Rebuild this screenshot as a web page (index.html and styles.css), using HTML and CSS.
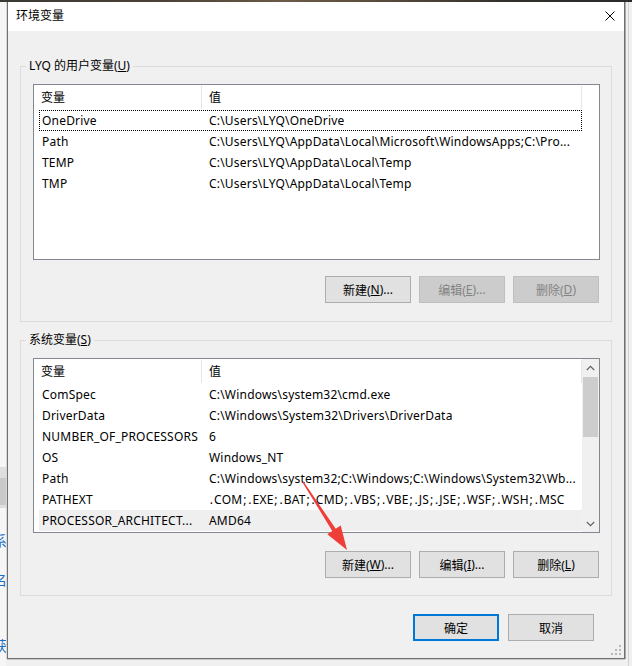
FILE: index.html
```html
<!DOCTYPE html>
<html lang="zh-CN">
<head>
<meta charset="utf-8">
<title>环境变量</title>
<link rel="stylesheet" href="styles.css">
</head>
<body>
<div class="desktop">
  <div class="wallpaper-strip"></div>
  <div class="back-window">
    <div class="back-band"></div>
    <span class="back-link first">系</span>
    <span class="back-link second">名</span>
    <span class="back-link third">获</span>
  </div>
  <div class="back-right"></div>

  <div class="dialog">
    <div class="titlebar">
      <span class="title">环境变量</span>
      <span class="close">
        <svg width="10" height="10" viewBox="0 0 10 10"><path d="M0.5 0.5 L9.5 9.5 M9.5 0.5 L0.5 9.5" stroke="#000" stroke-width="1" fill="none"/></svg>
      </span>
    </div>

    <div class="dialog-body">
      <fieldset class="group group-user">
        <legend>LYQ 的用户变量(<u>U</u>)</legend>
        <div class="group-inner">
          <div class="list list-user">
            <div class="list-main">
              <div class="list-head">
                <div class="hcol hname">变量</div>
                <div class="hcol hval">值</div>
              </div>
              <div class="row focused"><span class="c1">OneDrive</span><span class="c2">C:\Users\LYQ\OneDrive</span></div>
              <div class="row"><span class="c1">Path</span><span class="c2">C:\Users\LYQ\AppData\Local\Microsoft\WindowsApps;C:\Pro...</span></div>
              <div class="row"><span class="c1">TEMP</span><span class="c2">C:\Users\LYQ\AppData\Local\Temp</span></div>
              <div class="row"><span class="c1">TMP</span><span class="c2">C:\Users\LYQ\AppData\Local\Temp</span></div>
            </div>
          </div>
          <div class="btnrow">
            <button class="btn">新建(<u>N</u>)...</button>
            <button class="btn" disabled>编辑(<u>E</u>)...</button>
            <button class="btn" disabled>删除(<u>D</u>)</button>
          </div>
        </div>
      </fieldset>

      <fieldset class="group group-system">
        <legend>系统变量(<u>S</u>)</legend>
        <div class="group-inner">
          <div class="list list-system">
            <div class="list-main">
              <div class="list-head">
                <div class="hcol hname">变量</div>
                <div class="hcol hval">值</div>
              </div>
              <div class="row"><span class="c1">ComSpec</span><span class="c2">C:\Windows\system32\cmd.exe</span></div>
              <div class="row"><span class="c1">DriverData</span><span class="c2">C:\Windows\System32\Drivers\DriverData</span></div>
              <div class="row"><span class="c1">NUMBER_OF_PROCESSORS</span><span class="c2">6</span></div>
              <div class="row"><span class="c1">OS</span><span class="c2">Windows_NT</span></div>
              <div class="row"><span class="c1">Path</span><span class="c2">C:\Windows\system32;C:\Windows;C:\Windows\System32\Wb...</span></div>
              <div class="row"><span class="c1">PATHEXT</span><span class="c2"><span class="pu">.</span>COM<span class="pu">;</span><span class="pu">.</span>EXE<span class="pu">;</span><span class="pu">.</span>BAT<span class="pu">;</span><span class="pu">.</span>CMD<span class="pu">;</span><span class="pu">.</span>VBS<span class="pu">;</span><span class="pu">.</span>VBE<span class="pu">;</span><span class="pu">.</span>JS<span class="pu">;</span><span class="pu">.</span>JSE<span class="pu">;</span><span class="pu">.</span>WSF<span class="pu">;</span><span class="pu">.</span>WSH<span class="pu">;</span><span class="pu">.</span>MSC</span></div>
              <div class="row selected"><span class="c1">PROCESSOR_ARCHITECT...</span><span class="c2">AMD64</span></div>
            </div>
            <div class="scrollbar">
              <div class="sb-arrow">
                <svg width="9" height="6" viewBox="0 0 9 6"><path d="M0.8 5 L4.5 1.3 L8.2 5" stroke="#606060" stroke-width="1.1" fill="none"/></svg>
              </div>
              <div class="sb-track"><div class="sb-thumb"></div></div>
              <div class="sb-arrow">
                <svg width="9" height="6" viewBox="0 0 9 6"><path d="M0.8 1 L4.5 4.7 L8.2 1" stroke="#606060" stroke-width="1.1" fill="none"/></svg>
              </div>
            </div>
          </div>
          <div class="btnrow">
            <button class="btn">新建(<u>W</u>)...</button>
            <button class="btn">编辑(<u>I</u>)...</button>
            <button class="btn">删除(<u>L</u>)</button>
          </div>
        </div>
      </fieldset>

      <div class="actions">
        <button class="btn default">确定</button>
        <button class="btn">取消</button>
      </div>
    </div>

    <svg class="grip" width="11" height="11" viewBox="0 0 11 11">
      <rect x="8" y="0" width="2" height="2" fill="#b9b9b9"/>
      <rect x="4" y="4" width="2" height="2" fill="#b9b9b9"/>
      <rect x="8" y="4" width="2" height="2" fill="#b9b9b9"/>
      <rect x="0" y="8" width="2" height="2" fill="#b9b9b9"/>
      <rect x="4" y="8" width="2" height="2" fill="#b9b9b9"/>
      <rect x="8" y="8" width="2" height="2" fill="#b9b9b9"/>
    </svg>
  </div>

  <svg class="annotation" width="632" height="666" viewBox="0 0 632 666">
    <polygon points="303.5,481.6 335.7,528.8 340.7,525.6 347,550 327.3,534.2 332.3,531 302.5,482.4" fill="#ef3d38"/>
  </svg>
</div>
</body>
</html>
```

FILE: styles.css
```css
* {
  box-sizing: border-box;
}

html,
body {
  margin: 0;
  padding: 0;
}

body {
  width: 632px;
  height: 666px;
  overflow: hidden;
  background: #f0f0f0;
  font-family: "Noto Sans", "Noto Sans CJK SC", sans-serif;
  font-size: 12px;
  color: #000;
}

.desktop {
  position: relative;
  width: 632px;
  height: 666px;
  overflow: hidden;
  background: #f0f0f0;
}

.wallpaper-strip {
  height: 2px;
  background: linear-gradient(90deg, #3a3935 0%, #4b4136 25%, #6b5a46 45%, #5a4c3c 60%, #33302c 80%, #2a2a2a 100%);
}

/* window behind the dialog, only its right edge is visible */
.back-window {
  position: absolute;
  left: 0;
  top: 2px;
  width: 6px;
  height: 664px;
  overflow: hidden;
  background: #f6f6f6;
  display: flex;
  flex-direction: column;
}

.back-band {
  margin-top: 465px;
  height: 41px;
  background: linear-gradient(180deg, #dedede 0, #dedede 11px, #c9c9c9 11px, #c9c9c9 38px, #dedede 38px);
  flex: none;
}

.back-link {
  display: block;
  width: 14px;
  margin-left: -7px;
  font-size: 14px;
  line-height: 16px;
  color: #1f6fc5;
  font-family: "Noto Sans CJK SC", sans-serif;
  flex: none;
}

.back-link.first {
  margin-top: 24px;
}

.back-link.second {
  margin-top: 23px;
}

.back-link.third {
  margin-top: 50px;
}

.back-right {
  position: absolute;
  left: 628px;
  top: 2px;
  width: 1px;
  height: 664px;
  background: #d2d2d2;
}

/* dialog window */
.dialog {
  position: absolute;
  left: 7px;
  top: 2px;
  width: 618px;
  height: 657px;
  background: #f0f0f0;
  border: 1px solid #707070;
  border-top: none;
  box-shadow: 1px 0 0 #a8a8a8, -1px 0 0 #d8d8d8, 0 1px 0 #c8c8c8;
  display: flex;
  flex-direction: column;
}

.titlebar {
  height: 29px;
  flex: none;
  background: #fff;
  display: flex;
  align-items: center;
  justify-content: space-between;
  padding: 0 9px 3px 8px;
}

.title {
  font-family: "Noto Sans CJK SC", sans-serif;
  font-size: 12px;
  line-height: 16px;
}

.close {
  display: flex;
  width: 10px;
  height: 10px;
  margin-top: 1px;
}

.dialog-body {
  flex: 1;
  padding: 27px 12px 0 12px;
  display: flex;
  flex-direction: column;
}

.group {
  margin: 0;
  padding: 0;
  border: 1px solid #dcdcdc;
  min-width: 0;
}

.group legend {
  margin-left: 5px;
  padding: 0 3px;
  line-height: 16px;
  font-size: 12px;
}

.group-system {
  margin-top: 10px;
}

.group-inner {
  padding: 10px 11px 18px 12px;
}

.group-system .group-inner {
  padding-bottom: 17px;
}

.list {
  border: 1px solid #828790;
  background: #fff;
  display: flex;
}

.list-user {
  height: 176px;
}

.list-system {
  height: 175px;
}

.list-main {
  flex: 1;
  min-width: 0;
  overflow: hidden;
}

.list-head {
  height: 25px;
  display: flex;
}

.hcol {
  display: flex;
  align-items: center;
  padding-left: 7px;
  padding-bottom: 1px;
  border-right: 1px solid #e5e5e5;
  margin: 1px 0 1px 0;
}

.hname {
  width: 168px;
}

.hval {
  width: 380px;
}

.row {
  height: 21px;
  margin-left: 5px;
  width: 543px;
  display: flex;
  align-items: center;
  white-space: nowrap;
  letter-spacing: 0.2px;
}

.row.focused {
  outline: 1px dotted #000;
  outline-offset: -1px;
}

.row.selected {
  background: #efefef;
}

.c1 {
  width: 163px;
  padding-left: 3px;
  overflow: hidden;
  flex: none;
}

.c2 {
  flex: 1;
  padding-left: 7px;
  overflow: hidden;
}

.pu {
  padding: 0 0.85px;
}

.scrollbar {
  width: 17px;
  flex: none;
  background: #f0f0f0;
  display: flex;
  flex-direction: column;
}

.sb-arrow {
  height: 17px;
  flex: none;
  display: flex;
  align-items: center;
  justify-content: center;
}

.sb-track {
  flex: 1;
  padding: 1px 1px 0 1px;
}

.sb-thumb {
  height: 60px;
  background: #cdcdcd;
}

.btnrow {
  margin-top: 16px;
  padding-right: 1px;
  display: flex;
  justify-content: flex-end;
  gap: 8px;
}

.group-system .btnrow {
  margin-top: 18px;
}

.btn {
  width: 86px;
  height: 27px;
  margin: 0;
  padding: 0;
  background: #e1e1e1;
  border: 1px solid #adadad;
  border-radius: 0;
  font-family: "Noto Sans", "Noto Sans CJK SC", sans-serif;
  font-size: 12px;
  color: #000;
  display: flex;
  align-items: center;
  justify-content: center;
}

.btn:disabled {
  background: #cccccc;
  border-color: #bfbfbf;
  color: #838383;
}

.btn.default {
  border: 2px solid #0078d7;
}

.actions {
  margin-top: 18px;
  padding-right: 18px;
  display: flex;
  justify-content: flex-end;
  gap: 9px;
}

.grip {
  position: absolute;
  right: 2px;
  bottom: 2px;
}

.annotation {
  position: absolute;
  left: 0;
  top: 0;
  pointer-events: none;
}
```
